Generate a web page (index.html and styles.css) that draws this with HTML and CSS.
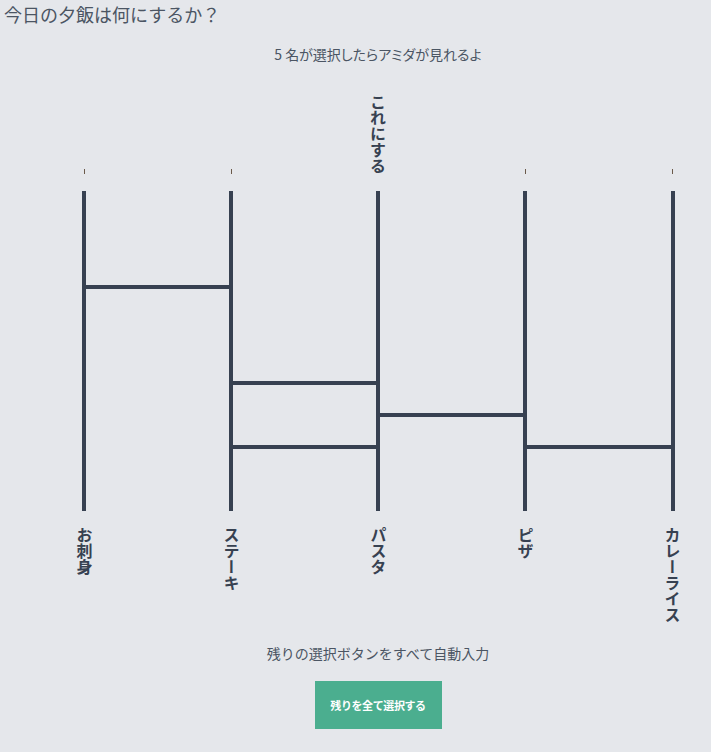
FILE: index.html
```html
<!DOCTYPE html>
<html lang="ja">
<head>
<meta charset="utf-8">
<title>アミダ</title>
<link rel="stylesheet" href="styles.css">
</head>
<body>
<h1 class="title">今日の夕飯は何にするか？</h1>
<main class="board">
  <p class="subtitle">5 名が選択したらアミダが見れるよ</p>
  <div class="tops">
    <div class="top-cell"><span class="tick"></span></div>
    <div class="top-cell"><span class="tick"></span></div>
    <div class="top-cell"><span class="pick">これにする</span></div>
    <div class="top-cell"><span class="tick"></span></div>
    <div class="top-cell"><span class="tick"></span></div>
  </div>
  <svg class="ladder" width="736" height="320" viewBox="0 0 736 320" aria-hidden="true">
    <g fill="#374151">
      <rect x="72" y="0" width="4" height="320"/>
      <rect x="219" y="0" width="4" height="320"/>
      <rect x="366" y="0" width="4" height="320"/>
      <rect x="513" y="0" width="4" height="320"/>
      <rect x="661" y="0" width="4" height="320"/>
      <rect x="76" y="94" width="143" height="4"/>
      <rect x="223" y="190" width="143" height="4"/>
      <rect x="370" y="222" width="143" height="4"/>
      <rect x="223" y="254" width="143" height="4"/>
      <rect x="517" y="254" width="144" height="4"/>
    </g>
  </svg>
  <div class="bottoms">
    <div class="bottom-cell"><span class="name">お刺身</span></div>
    <div class="bottom-cell"><span class="name">ステーキ</span></div>
    <div class="bottom-cell"><span class="name">パスタ</span></div>
    <div class="bottom-cell"><span class="name">ピザ</span></div>
    <div class="bottom-cell"><span class="name">カレーライス</span></div>
  </div>
  <p class="auto-text">残りの選択ボタンをすべて自動入力</p>
  <div class="actions">
    <button class="select-all" type="button">残りを全て選択する</button>
  </div>
</main>
</body>
</html>
```

FILE: styles.css
```css
html {
  overflow-x: hidden;
}
body {
  margin: 0;
  background: #e5e7eb;
  font-family: "Noto Sans CJK JP", "Noto Sans", sans-serif;
  color: #4b5563;
}
.title {
  margin: 0;
  padding-left: 4px;
  font-size: 18px;
  line-height: 28px;
  font-weight: 400;
  color: #4b5563;
}
.board {
  width: 736px;
  margin-left: 10px;
}
.subtitle {
  margin: 16px 0 0;
  text-align: center;
  font-size: 14px;
  line-height: 20px;
  font-feature-settings: "palt";
  color: #4b5563;
}
.tops {
  display: grid;
  grid-template-columns: repeat(5, 147px);
  height: 90px;
  margin-top: 20px;
  margin-bottom: 17px;
}
.top-cell {
  display: flex;
  justify-content: center;
  align-items: flex-end;
  padding-left: 1px;
}
.tick {
  width: 1px;
  height: 5px;
  background: #6b5a4a;
}
.pick {
  writing-mode: vertical-rl;
  font-size: 16px;
  font-weight: 700;
  line-height: 20px;
  color: #374151;
}
.ladder {
  display: block;
}
.bottoms {
  display: grid;
  grid-template-columns: repeat(5, 147px);
  margin-top: 16px;
  height: 116px;
}
.bottom-cell {
  display: flex;
  justify-content: center;
  align-items: flex-start;
  padding-left: 2px;
}
.name {
  writing-mode: vertical-rl;
  font-size: 16px;
  font-weight: 700;
  line-height: 20px;
  color: #374151;
}
.auto-text {
  margin: 0;
  text-align: center;
  font-size: 14px;
  line-height: 20px;
  color: #4b5563;
}
.actions {
  display: flex;
  justify-content: center;
  margin-top: 18px;
}
.select-all {
  width: 127px;
  height: 48px;
  border: 0;
  padding: 0;
  background: #4bae8f;
  color: #ffffff;
  font-family: inherit;
  font-size: 11px;
  letter-spacing: -0.4px;
  font-weight: 700;
}
```
